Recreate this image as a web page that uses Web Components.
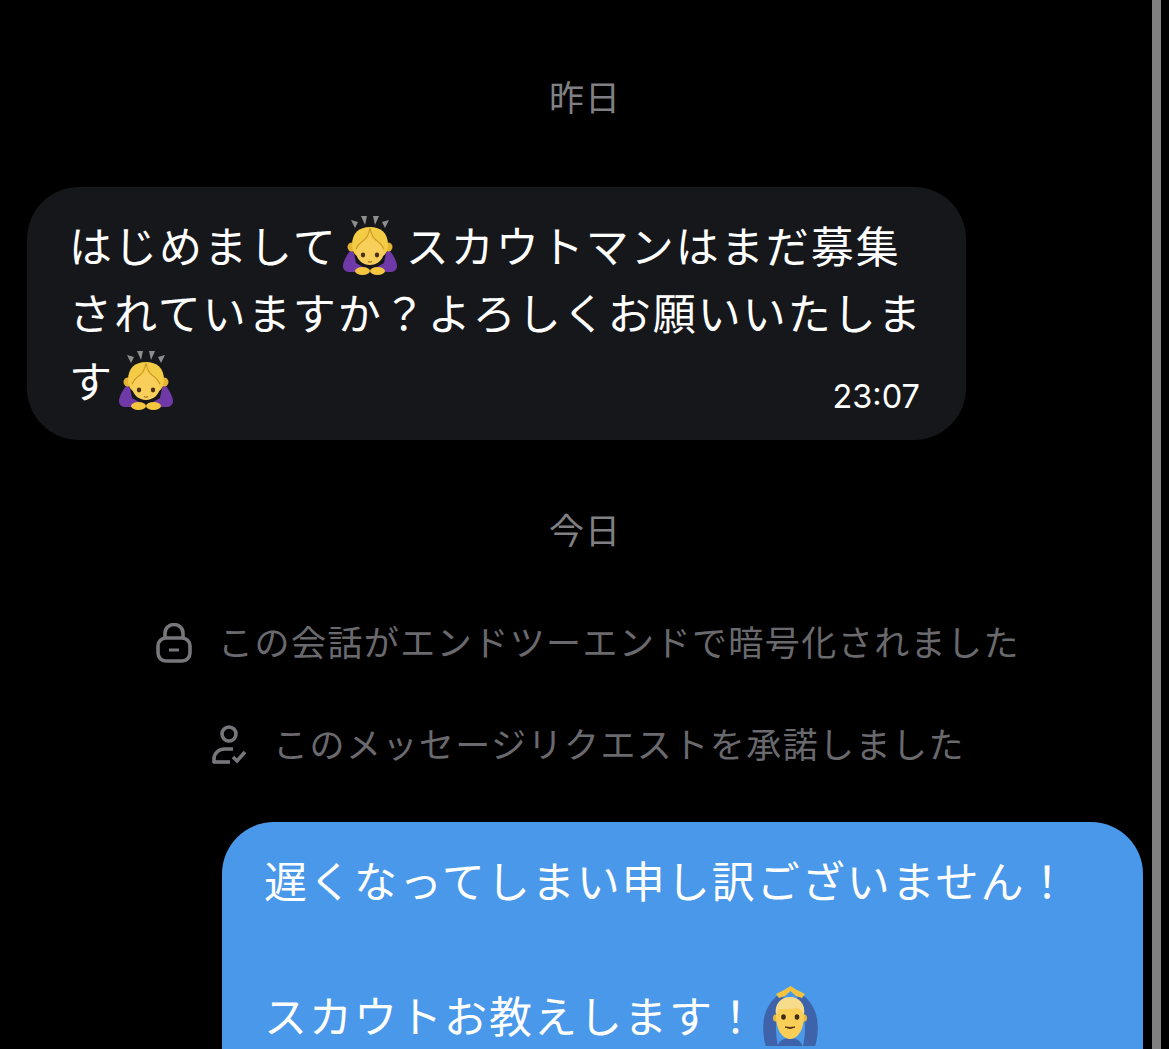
<!DOCTYPE html>
<html lang="ja">
<head>
<meta charset="utf-8">
<title>chat</title>
<style>
  html, body { margin: 0; height: 100%; background: #000; overflow: hidden; }
  body { font-family: "Inter", "Noto Sans CJK JP", sans-serif; }
</style>
</head>
<body>
<svg width="0" height="0" style="position:absolute">
  <defs>
    <symbol id="bow" viewBox="0 0 60 60" overflow="visible">
      <g fill="#8e8e8e"><path d="M10 4l7 2-3 6z"/><path d="M20 0h6l-2 9z"/><path d="M32 0h6l-4 9z"/><path d="M41 6l7-2-4 8z"/></g>
      <path d="M10 34C6 38 2 46 2 50c0 4 3 6 7 6h10l3-5-7-4-2-10z" fill="#6f39a8"/>
      <path d="M48 34c4 4 8 12 8 16 0 4-3 6-7 6H39l-3-5 7-4 2-10z" fill="#6f39a8"/>
      <ellipse cx="11" cy="31" rx="4.500" ry="4.500" fill="#e6b435"/><ellipse cx="47" cy="31" rx="4.500" ry="4.500" fill="#e6b435"/>
      <path d="M11 29c0-12 7-18 18-18s18 6 18 18c0 5-2 9-5 11H16c-3-2-5-6-5-11z" fill="#f3cb45"/>
      <path d="M29 12c-1 5-2 9-6 12-3 2-6 5-8 9M29 12c1 5 2 9 6 12 3 2 6 5 8 9" stroke="#c9962a" stroke-width="1.100" fill="none"/>
      <path d="M15 37c1-6 5-11 10-13 2-1 3-3 4-6 1 3 2 5 4 6 5 2 9 7 10 13-1 7-7 12-14 12s-13-5-14-12z" fill="#f8cf5a"/>
      <ellipse cx="22" cy="39" rx="2.200" ry="2.400" fill="#4a3015"/><ellipse cx="36" cy="39" rx="2.200" ry="2.400" fill="#4a3015"/>
      <path d="M27 45.500q2 1.300 4 0" stroke="#a8702a" stroke-width="1.200" fill="none"/>
      <ellipse cx="21.500" cy="55" rx="7.500" ry="4" fill="#f4c63f"/><ellipse cx="36.500" cy="55" rx="7.500" ry="4" fill="#f4c63f"/>
    </symbol>
    <symbol id="okman" viewBox="0 0 60 60" overflow="visible">
      <path d="M5 64C0 50 0 33 5 23 9 15 13 11 18 8l5 5c-4 4-7 9-8 16-2 12-1 24 2 35z" fill="#3f63aa"/>
      <path d="M52 64c5-14 5-31 0-41-4-8-8-12-13-15l-5 5c4 4 7 9 8 16 2 12 1 24-2 35z" fill="#3f63aa"/>
      <path d="M15 64c0-8 6-12 13-12s13 4 13 12z" fill="#3f63aa"/>
      <path d="M14 8l8-4 6.500-4 6.500 4 8 4-3 4-6-2-5.500-5-5.500 5-6 2z" fill="#f3c33f"/>
      <ellipse cx="13.500" cy="32" rx="2.500" ry="3.500" fill="#eab83c"/><ellipse cx="42.500" cy="32" rx="2.500" ry="3.500" fill="#eab83c"/>
      <path d="M14 30c0-12 6-18 14-18s14 6 14 18c0 13-6 23-14 23S14 43 14 30z" fill="#f9cf58"/>
      <path d="M14 29c-2-11 5-18 14-18s16 7 14 18c-2-3-4-6-6-7-6 1-14 1-19 1-1 2-2 4-3 6z" fill="#f7dc8c"/>
      <ellipse cx="21.500" cy="31" rx="2.300" ry="2.700" fill="#3f2a14"/><ellipse cx="35" cy="31" rx="2.300" ry="2.700" fill="#3f2a14"/>
      <path d="M23 41q5 3 10 0q-5 .8-10 0z" fill="#5a3418" stroke="#5a3418"/>
    </symbol>
  </defs>
</svg>

<template id="chat-thread-tpl">
  <style>
    :host { display: flex; height: 1049px; box-sizing: border-box; background: #000; overflow: hidden; }
    .col { flex: 1; min-width: 0; display: flex; flex-direction: column; padding: 0 9px 0 27px; }
    .bar { flex: none; width: 9px; margin-right: 8px; background: #808080; }
  </style>
  <div class="col"><slot></slot></div>
  <div class="bar"></div>
</template>

<template id="day-label-tpl">
  <style>
    :host { display: block; text-align: center; color: #808084; font-size: 35px; letter-spacing: 1px; line-height: 40px; }
  </style>
  <slot></slot>
</template>

<template id="msg-bubble-tpl">
  <style>
    :host { display: block; box-sizing: border-box; color: #fff; font-size: 43px; letter-spacing: 2px; line-height: 67.5px; }
    :host([side="in"]) { width: 939px; background: #16171a; border-radius: 52px; padding: 26.5px 36px 25px 42px; }
    :host([side="out"]) { width: 921px; flex: 1; align-self: flex-end; background: #4a98e9; border-radius: 52px 52px 0 0; padding: 27px 43px 0 42px; }
    .meta { text-align: right; font-size: 32.500px; letter-spacing: 0; line-height: 36px; margin: -37px 10px 0 0; }
    ::slotted(svg) { width: 60px; height: 60px; vertical-align: -3px; margin: -20px 5px -10px 3px; }
  </style>
  <slot></slot>
  <div class="meta"><slot name="time"></slot></div>
</template>

<template id="system-note-tpl">
  <style>
    :host { display: flex; justify-content: center; align-items: center; gap: 26px; color: #6a6a6e; font-size: 35px; letter-spacing: 1.450px; line-height: 40px; padding-left: 6px; }
    ::slotted(svg) { flex: none; }
  </style>
  <slot name="icon"></slot>
  <span><slot></slot></span>
</template>

<script>
  function register(name) {
    const tpl = document.getElementById(name + '-tpl');
    customElements.define(name, class extends HTMLElement {
      constructor() {
        super();
        this.attachShadow({mode: 'open'}).appendChild(tpl.content.cloneNode(true));
      }
    });
  }
  ['chat-thread', 'day-label', 'msg-bubble', 'system-note'].forEach(register);
</script>

<chat-thread>
  <day-label style="margin-top:78px">昨日</day-label>
  <msg-bubble side="in" style="margin-top:69px">はじめまして<svg viewBox="0 0 60 60"><use href="#bow"/></svg>スカウトマンはまだ募集されていますか？よろしくお願いいたします<svg viewBox="0 0 60 60"><use href="#bow"/></svg><span slot="time">23:07</span></msg-bubble>
  <day-label style="margin-top:71px">今日</day-label>
  <system-note style="margin-top:72px">
    <svg slot="icon" width="36" height="40" viewBox="0 0 36 40" fill="none" stroke="#77777b" stroke-width="3.600"><rect x="2" y="15" width="32" height="23" rx="8"/><path d="M9 15v-5a9 8.500 0 0 1 18 0v5"/><path d="M13 27h10" stroke-width="3"/></svg>
    この会話がエンドツーエンドで暗号化されました
  </system-note>
  <system-note style="margin-top:62px">
    <svg slot="icon" width="36" height="40" viewBox="0 0 36 40" fill="none" stroke="#77777b" stroke-width="3.600"><circle cx="18" cy="9" r="7"/><path d="M3 38v-4c0-6 5-10 11-10h8"/><path d="M2 37h17"/><path d="M22 32l4 4 8-9"/></svg>
    このメッセージリクエストを承諾しました
  </system-note>
  <msg-bubble side="out" style="margin-top:57px">遅くなってしまい申し訳ございません！<br><br>スカウトお教えします！<svg viewBox="0 0 60 60"><use href="#okman"/></svg></msg-bubble>
</chat-thread>
</body>
</html>
